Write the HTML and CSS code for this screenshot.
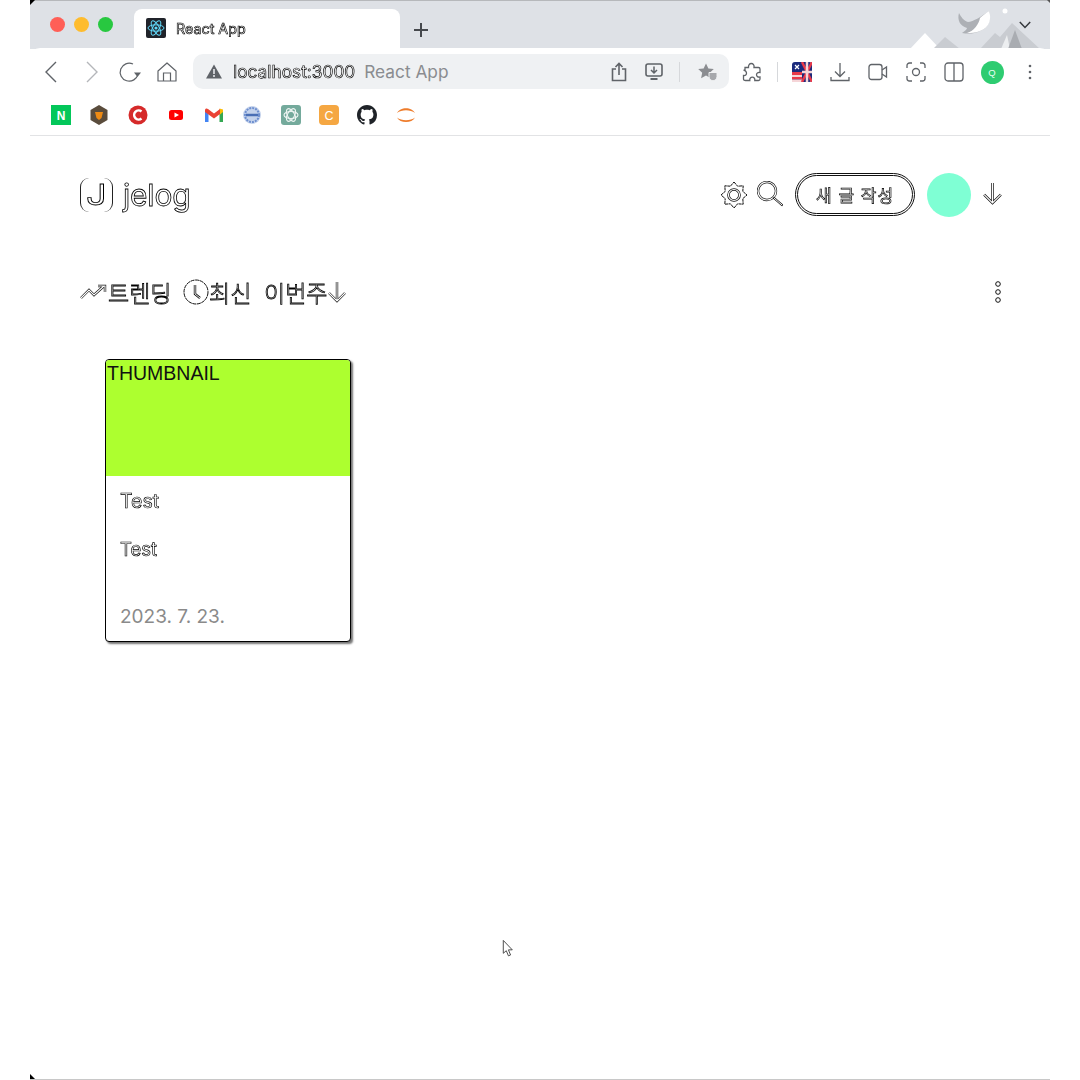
FILE: index.html
```html
<!DOCTYPE html>
<html lang="ko">
<head>
<meta charset="utf-8">
<title>React App</title>
<link rel="stylesheet" href="styles.css">
</head>
<body>
<div class="window">
  <div class="corner corner-top"></div>
  <div class="corner corner-right"></div>
  <div class="tabstrip">
    <div class="lights"><span class="light red"></span><span class="light yellow"></span><span class="light green"></span></div>
    <div class="tab">
      <svg class="favicon" viewBox="0 0 20 20"><rect width="20" height="20" rx="2" fill="#20232a"/><g fill="none" stroke="#61dafb" stroke-width="1"><ellipse cx="10" cy="10" rx="8" ry="3.2"/><ellipse cx="10" cy="10" rx="8" ry="3.2" transform="rotate(60 10 10)"/><ellipse cx="10" cy="10" rx="8" ry="3.2" transform="rotate(120 10 10)"/></g><circle cx="10" cy="10" r="1.6" fill="#61dafb"/></svg>
      <span class="tab-title outline-thin">React App</span>
    </div>
    <svg class="newtab" viewBox="0 0 14 14"><path d="M7 0v14M0 7h14" stroke="#45484d" stroke-width="2"/></svg>
    <svg class="theme" viewBox="0 0 160 49">
      <path d="M20 49 35 33 50 49Z" fill="#fff"/>
      <path d="M43 49 55 37 70 49Z" fill="#c9ccd1"/>
      <path d="M90 49 105 33 110 37 122 23 150 49Z" fill="#c9ccd1"/>
      <path d="M111 49 117 35 120 49Z" fill="#eceef0"/>
      <path d="M118 49 125 30 132 49Z" fill="#a9acb1"/>
      <path d="M69 13C71 17 74 21 78 22 83 22 92 16 99 11 101 19 99 28 90 31 84 34 78 34 72 33 75 31 77 29 77 28 70 26 67 20 69 13Z" fill="#adb0b5"/>
      <path d="M99 11C102 19 99 28 90 31 85 33 81 33 77 33 84 31 89 24 90 18 93 15 96 13 99 11Z" fill="#fff"/>
      <circle cx="115" cy="11" r="2.5" fill="#fff"/>
    </svg>
    <svg class="chevron" viewBox="0 0 12 8"><path d="M.8 1 6 6.4 11.2 1" fill="none" stroke="#35383c" stroke-width="1.5"/></svg>
  </div>

  <div class="toolbar">
    <button class="tb back"><svg viewBox="0 0 24 24" class="ic"><path d="M16 3 6 13l10 10" transform="translate(0 -1)" fill="none" stroke="#5f6368" stroke-width="1.4"/></svg></button>
    <button class="tb forward"><svg viewBox="0 0 24 24" class="ic"><path d="m8 3 10 10L8 23" transform="translate(-1 -1)" fill="none" stroke="#b4b6ba" stroke-width="1.4"/></svg></button>
    <button class="tb reload"><svg viewBox="0 0 24 24" class="ic"><path d="M21 14a9 9 0 1 1-5-10" fill="none" stroke="#5f6368" stroke-width="1.2"/><path d="M17 12.500h7l-3.500 4.500z" fill="#5f6368"/></svg></button>
    <button class="tb home"><svg viewBox="0 0 24 24" class="ic"><path d="M3 11 12 3l9 8v10H3z" fill="none" stroke="#5f6368" stroke-width="1.2" stroke-linejoin="round"/><path d="M8.500 21v-8h7v8" fill="none" stroke="#5f6368" stroke-width="1.2"/></svg></button>
    <div class="omnibox">
      <svg class="warn" viewBox="0 0 16 15"><path d="M8 .5 16 14.500H0Z" fill="#5f6368"/><path d="M8 5v5M8 11v2" stroke="#eff1f3" stroke-width="1.500"/></svg>
      <span class="url outline-thin">localhost:3000</span>
      <span class="page-name">React App</span>
      <span class="omni-spacer"></span>
      <svg class="omni-ic share" viewBox="0 0 16 20"><path d="M5 7H1.500v11.500h13V7H11M8 13V1.500M4.500 5 8 1.500 11.500 5" fill="none" stroke="#5f6368" stroke-width="1.600"/></svg>
      <svg class="omni-ic install" viewBox="0 0 18 18"><rect x="1" y="1" width="16" height="12" rx="2" fill="none" stroke="#5f6368" stroke-width="1.600"/><path d="M9 3.500v6M6 7l3 3 3-3" fill="none" stroke="#5f6368" stroke-width="1.500"/><path d="M5.500 15h7v2h-7z" fill="#5f6368"/></svg>
      <span class="sep omni-sep"></span>
      <svg class="omni-ic star" viewBox="0 0 20 18"><path d="m8 .5 2.400 5 5.400.6-4 3.700 1.100 5.400L8 12.500 3.100 15.200l1.100-5.400-4-3.700 5.400-.6z" fill="#8b8d91"/><path d="M11 9.500h8v4c0 2.500-2 4-4 4.300-2-.3-4-1.800-4-4.300z" fill="#a6a8ac" stroke="#eff1f3"/></svg>
    </div>
    <button class="tb ext"><svg viewBox="0 0 20 20" class="ic"><path d="M3 8V5.500h3.500C6.300 3 7.500 1.500 9.300 1.500S12.500 3 12 5.500h4.500c1 0 1.500.5 1.500 1.500v3.500c-2.300-.4-3.500.8-3.500 2.300s1.300 2.600 3.500 2.200v2c0 1-.5 1.500-1.500 1.500h-3.700c.3-2.300-1-3.300-2.500-3.300s-2.800 1-2.500 3.300H3.500c-1 0-2-.5-2-1.500v-3.500c2 .3 3-1 3-2.200S3.500 8 1.500 8.300" fill="none" stroke="#5f6368" stroke-width="1.300"/></svg></button>
    <span class="sep tool-sep"></span>
    <button class="tb flag"><svg viewBox="0 0 20 20" class="ic"><rect width="20" height="20" rx="3" fill="#1b2a7c"/><path d="M0 10h10v3H0zM0 15h10v2.500H0z" fill="#e8394a"/><path d="M0 13h10v2H0zM0 17.500h10V20H0z" fill="#f5d5d8"/><path d="M10 0l10 20M20 0 10 20" stroke="#e8394a" stroke-width="2.500"/><path d="M15 0v20M10 10h10" stroke="#f5d5d8" stroke-width="2.500"/><path d="M3 3l4 4M7 3 3 7" stroke="#fff" stroke-width="1.200"/></svg></button>
    <button class="tb"><svg viewBox="0 0 20 20" class="ic"><path d="M10 1v13M5 9.500l5 5 5-5M1 15v3.500h18V15" fill="none" stroke="#5f6368" stroke-width="1.300"/></svg></button>
    <button class="tb"><svg viewBox="0 0 20 20" class="ic"><rect x="1" y="2.500" width="13" height="15" rx="2.500" fill="none" stroke="#5f6368" stroke-width="1.300"/><path d="M14 8l4.500-3v10L14 12" fill="none" stroke="#5f6368" stroke-width="1.300"/></svg></button>
    <button class="tb"><svg viewBox="0 0 20 20" class="ic"><path d="M1 6V3.500A2.500 2.500 0 0 1 3.500 1H6M14 1h2.500A2.500 2.500 0 0 1 19 3.500V6M19 14v2.500a2.500 2.500 0 0 1-2.500 2.500H14M6 19H3.500A2.500 2.500 0 0 1 1 16.500V14" fill="none" stroke="#5f6368" stroke-width="1.300"/><circle cx="10" cy="10" r="3.500" fill="none" stroke="#5f6368" stroke-width="1.300"/></svg></button>
    <button class="tb"><svg viewBox="0 0 20 20" class="ic"><rect x="1" y="1" width="18" height="18" rx="3" fill="none" stroke="#5f6368" stroke-width="1.300"/><path d="M10 1v18" stroke="#5f6368" stroke-width="1.300"/></svg></button>
    <button class="tb"><span class="profile">Q</span></button>
    <button class="tb"><svg viewBox="0 0 4 16" class="dots"><circle cx="2" cy="2" r="1.300" fill="#5f6368"/><circle cx="2" cy="8" r="1.300" fill="#5f6368"/><circle cx="2" cy="14" r="1.300" fill="#5f6368"/></svg></button>
  </div>

  <div class="bookmarks">
    <svg class="bm" viewBox="0 0 20 20"><rect width="20" height="20" fill="#03c75a"/><text x="10" y="15" text-anchor="middle" class="bm-text">N</text></svg>
    <svg class="bm" viewBox="0 0 20 20"><path d="M10 0 18.500 5v10L10 20l-8.500-5V5z" fill="#5a4c3c"/><path d="M6 7h8l-1.500 6L10 15l-2.500-2z" fill="#ee8a13"/></svg>
    <svg class="bm" viewBox="0 0 20 20"><circle cx="10" cy="10" r="9.500" fill="#d62a2a"/><path d="M13.500 6.500a4.500 4.500 0 1 0 0 7" fill="none" stroke="#fff" stroke-width="2.500"/></svg>
    <svg class="bm" viewBox="0 0 20 20"><rect x="3" y="5" width="14" height="10" rx="2.500" fill="#f00"/><path d="m8.500 7.500 4.500 2.500-4.500 2.500z" fill="#fff"/></svg>
    <svg class="bm" viewBox="0 0 20 20"><path d="M1 5v12h3.500V9z" fill="#4285f4"/><path d="M19 5v12h-3.500V9z" fill="#34a853"/><path d="M15.500 3.500 19 4.500V7l-3.500 3z" fill="#fbbc04"/><path d="M1 7V5c0-1.500 1.800-2 3-1l6 4.500L16 4v5l-6 4.500z" fill="#ea4335"/></svg>
    <svg class="bm" viewBox="0 0 20 20"><circle cx="10" cy="10" r="9" fill="#c5d3ec"/><circle cx="10" cy="10" r="7" fill="none" stroke="#6e8fcf" stroke-width="2" stroke-dasharray="2 1"/><path d="M4 10h12" stroke="#4a6fb5" stroke-width="2.500"/></svg>
    <svg class="bm" viewBox="0 0 20 20"><rect width="20" height="20" rx="3" fill="#74aa9c"/><g fill="none" stroke="#eef5f3" stroke-width="1.100"><ellipse cx="10" cy="10" rx="7" ry="3.500"/><ellipse cx="10" cy="10" rx="7" ry="3.500" transform="rotate(60 10 10)"/><ellipse cx="10" cy="10" rx="7" ry="3.500" transform="rotate(120 10 10)"/></g></svg>
    <svg class="bm" viewBox="0 0 20 20"><rect width="20" height="20" rx="4" fill="#f5a742"/><text x="10" y="14.500" text-anchor="middle" class="bm-text light-text">C</text></svg>
    <svg class="bm" viewBox="0 0 16 16"><path fill="#1f2328" d="M8 0C3.580 0 0 3.580 0 8c0 3.540 2.290 6.530 5.470 7.590.4.070.55-.17.55-.38 0-.19-.01-.82-.01-1.490-2.010.37-2.530-.49-2.690-.94-.09-.23-.48-.94-.82-1.130-.28-.15-.68-.52-.01-.53.630-.01 1.080.58 1.230.82.720 1.210 1.870.87 2.330.66.070-.52.280-.87.510-1.070-1.780-.2-3.640-.89-3.640-3.950 0-.87.310-1.590.82-2.150-.08-.2-.36-1.020.08-2.120 0 0 .67-.21 2.200.82.640-.18 1.320-.27 2-.27s1.360.09 2 .27c1.530-1.040 2.200-.82 2.200-.82.440 1.100.16 1.920.08 2.120.51.560.82 1.270.82 2.150 0 3.070-1.870 3.750-3.650 3.950.29.250.54.730.54 1.480 0 1.070-.01 1.930-.01 2.200 0 .21.150.46.550.38A8.010 8.010 0 0 0 16 8c0-4.420-3.580-8-8-8z"/></svg>
    <svg class="bm" viewBox="0 0 20 20"><path d="M1 8C4 1.500 16 1.500 19 8 14.500 4.300 5.500 4.300 1 8ZM1 12.500C4 18.500 16 18.500 19 12.500 14.500 16 5.500 16 1 12.500Z" fill="#ee7c2b"/></svg>
  </div>

  <main class="page">
    <header class="site-header">
      <a class="logo">
        <span class="logo-mark"><span class="logo-j outline">J</span></span>
        <span class="logo-text outline">jelog</span>
      </a>
      <div class="header-actions">
        <svg class="head-ic gear" viewBox="0 0 28 28"><g fill="none"><path d="M14 1 17.600 5.200 23.200 4.800 22.800 10.400 27 14 22.800 17.600 23.200 23.200 17.600 22.800 14 27 10.400 22.800 4.800 23.200 5.200 17.600 1 14 5.200 10.400 4.800 4.800 10.400 5.200Z" stroke="#111" stroke-width="1" stroke-dasharray="3 .5"/><circle cx="14" cy="14" r="5.500" stroke="#111" stroke-width="2.600"/><circle cx="14" cy="14" r="5.500" stroke="#fff" stroke-width="1.200"/></g></svg>
        <svg class="head-ic search" viewBox="0 0 26 26"><g fill="none" stroke-linecap="round"><circle cx="10" cy="10" r="9" stroke="#111" stroke-width="2.400"/><circle cx="10" cy="10" r="9" stroke="#fff" stroke-width="1.200"/><path d="M17 17l8 7" stroke="#111" stroke-width="2.200"/><path d="M17 17l8 7" stroke="#fff" stroke-width="1"/></g></svg>
        <button class="write-btn"><span class="outline-btn">새 글 작성</span></button>
        <span class="avatar"></span>
        <svg class="head-ic arrow" viewBox="0 0 20 22"><g fill="none"><path d="M10 1v19M2 12l8 8 8-8" stroke="#111" stroke-width="2.400"/><path d="M10 1v19M2 12l8 8 8-8" stroke="#fff" stroke-width="1.100"/></g></svg>
      </div>
    </header>

    <nav class="filter-row">
      <div class="filters">
        <span class="filter trending">
          <svg class="f-ic trend" viewBox="0 0 28 16"><g fill="none"><path d="M1 14l8-8 5 5 10-9M18 2h7v6" stroke="#111" stroke-width="2.400"/><path d="M1 14l8-8 5 5 10-9M18 2h7v6" stroke="#fff" stroke-width="1.100"/></g></svg>
          <span class="outline">트렌딩</span>
        </span>
        <span class="filter latest">
          <svg class="f-ic clock" viewBox="0 0 26 26"><g fill="none"><circle cx="13" cy="13" r="12" stroke="#111" stroke-width="1" stroke-dasharray="4 .6"/><path d="M12 6v9l5 4" stroke="#111" stroke-width="2.400"/><path d="M12 6v9l5 4" stroke="#fff" stroke-width=".9"/></g></svg>
          <span class="outline">최신</span>
        </span>
        <span class="filter week">
          <span class="outline">이번주</span>
          <svg class="f-ic down" viewBox="0 0 20 22"><g fill="none"><path d="M10 1v19M2 12l8 8 8-8" stroke="#111" stroke-width="2.400"/><path d="M10 1v19M2 12l8 8 8-8" stroke="#fff" stroke-width="1.100"/></g></svg>
        </span>
      </div>
      <svg class="kebab" viewBox="0 0 6 22"><g fill="#fff" stroke="#111" stroke-width="1"><circle cx="3" cy="3" r="2.300"/><circle cx="3" cy="11" r="2.300"/><circle cx="3" cy="19" r="2.300"/></g></svg>
    </nav>

    <article class="card">
      <div class="thumb">THUMBNAIL</div>
      <div class="card-body">
        <h2 class="card-title outline-thin">Test</h2>
        <p class="card-desc outline-thin">Test</p>
        <p class="card-date">2023. 7. 23.</p>
      </div>
    </article>
  </main>
  <svg class="cursor" viewBox="0 0 14 22"><path d="M1.500 1v15l3.500-3 2.500 6 2.500-1-2.500-6h4.500z" fill="#fff" stroke="#333" stroke-width="1"/></svg>
  <div class="corner corner-bottom"></div>
</div>
</body>
</html>
```
FILE: styles.css
```css
* { box-sizing: border-box; }
html, body { margin: 0; padding: 0; background: #fff; }
body { height: 1080px; overflow: hidden; font-family: Inter, "Noto Sans CJK KR", sans-serif; }

.window {
  position: relative;
  margin: 0 30px;
  height: 1080px;
  background: #fff;
  border-bottom: 1px solid #c8c8c8;
  display: flex;
  flex-direction: column;
  overflow: hidden;
}
.corner { position: absolute; width: 5px; height: 5px; background: #000; z-index: 3; }
.corner-top { left: 0; top: 0; clip-path: polygon(0 0, 100% 0, 0 100%); }
.corner-right { right: 0; top: 0; width: 3px; height: 3px; background: #555; clip-path: polygon(0 0, 100% 0, 100% 100%); }
.corner-bottom { left: 0; bottom: 0; clip-path: polygon(0 0, 100% 100%, 0 100%); }

.outline, .outline-thin, .outline-btn {
  display: inline-block;
  color: #fff;
  will-change: transform;
}
.outline { -webkit-text-stroke: .8px #000; }
.outline-thin { -webkit-text-stroke: .65px #000; }
.outline-btn { -webkit-text-stroke: .7px #000; }

.tabstrip {
  position: relative;
  flex: none;
  height: 49px;
  background: #dee1e6;
  border-top: 1px solid #b6b8bb;
  display: flex;
  align-items: flex-end;
}
.lights { display: flex; gap: 9px; align-self: flex-start; margin: 16px 0 0 20px; width: 84px; }
.light { width: 15px; height: 15px; border-radius: 50%; }
.red { background: #ff5f57; }
.yellow { background: #febc2e; }
.green { background: #28c840; }
.tab {
  width: 266px;
  height: 40px;
  background: #fff;
  border-radius: 8px 8px 0 0;
  display: flex;
  align-items: center;
  padding: 0 12px 2px;
  gap: 10px;
}
.favicon { width: 20px; height: 20px; }
.tab-title { font-size: 14.300px; }
.newtab { width: 14px; height: 14px; margin: 0 0 12px 14px; }
.theme { position: absolute; left: 860px; top: -1px; width: 160px; height: 49px; }
.chevron { position: absolute; right: 19px; top: 20px; width: 12px; height: 8px; }

.toolbar {
  flex: none;
  height: 48px;
  margin-top: -1px;
  background: #fff;
  border-radius: 10px 10px 0 0;
  display: flex;
  align-items: center;
  position: relative;
  padding: 0 1px 0 3px;
  z-index: 1;
}
.tb {
  flex: none;
  width: 38px;
  height: 38px;
  padding: 0;
  background: none;
  border: 0;
  display: flex;
  align-items: center;
  justify-content: center;
}
.ic { width: 20px; height: 20px; }
.back { margin-right: 2px; }
.back .ic, .forward .ic { width: 24px; height: 24px; }
.reload { width: 36px; }
.reload .ic { width: 24px; height: 24px; }
.home .ic { width: 24px; height: 24px; }
.home { margin-left: 1px; margin-right: -1px; }
.omnibox {
  flex: none;
  width: 536px;
  height: 35px;
  margin: -1px 4px 0 8px;
  background: #eff1f3;
  border-radius: 10px;
  display: flex;
  align-items: center;
  padding: 0 11px 0 13px;
}
.warn { width: 16px; height: 15px; margin-right: 11px; flex: none; }
.url { font-size: 17.300px; }
.page-name { font-size: 17.300px; color: #8a8c90; margin-left: 9px; }
.omni-spacer { flex: 1; }
.omni-ic { flex: none; }
.share { width: 16px; height: 20px; margin-right: 18px; }
.install { width: 18px; height: 18px; margin-right: 16px; }
.sep { flex: none; width: 1px; height: 20px; background: #d6d8db; }
.omni-sep { margin-right: 18px; }
.star { width: 20px; height: 18px; margin-right: 0; }
.tool-sep { margin: 0 5px 0 6px; }
.flag { width: 38px; }
.profile {
  width: 23px;
  height: 23px;
  border-radius: 50%;
  background: #2ecc71;
  color: #e8fff2;
  font-size: 9.500px;
  display: flex;
  align-items: center;
  justify-content: center;
}
.dots { width: 4px; height: 16px; }

.bookmarks {
  flex: none;
  height: 40px;
  border-bottom: 1px solid #e2e3e5;
  display: flex;
  align-items: center;
  gap: 18.300px;
  padding: 0 0 2px 21px;
}
.bm { width: 20px; height: 20px; flex: none; }
.bm-text { font: 700 12px "Liberation Sans", sans-serif; fill: #fff; }
.light-text { font-weight: 400; font-size: 12.500px; }

.page { flex: 1; padding: 37px 48px 0; }
.site-header { display: flex; align-items: center; justify-content: space-between; height: 43px; }
.logo { display: flex; align-items: center; gap: 10px; margin-left: 2px; }
.logo-mark {
  width: 33px;
  height: 34px;
  border-left: 1px solid #222;
  border-right: 1px solid #222;
  border-radius: 9px;
  display: flex;
  align-items: center;
  justify-content: center;
}
.logo-j { font-size: 29px; transform: scaleX(1.25); }
.logo-text { font-size: 30px; line-height: 36px; letter-spacing: -.2px; }
.header-actions { display: flex; align-items: center; }
.head-ic { flex: none; }
.gear { width: 28px; height: 28px; margin-right: 9px; }
.search { width: 26px; height: 26px; margin-right: 12px; margin-top: -2px; }
.write-btn {
  width: 120px;
  height: 43px;
  background: #fff;
  border: 3px double #111;
  border-radius: 22px;
  font-size: 17px;
  font-family: inherit;
  letter-spacing: 1px;
  padding: 0;
  margin-right: 12px;
}
.avatar { width: 44px; height: 44px; border-radius: 50%; background: #7fffd4; margin-right: 11px; }
.arrow { width: 21px; height: 23px; margin-right: -1px; margin-top: -2px; }

.filter-row {
  display: flex;
  align-items: center;
  justify-content: space-between;
  height: 40px;
  margin-top: 56px;
  font-size: 23px;
  font-weight: 300;
}
.filters { display: flex; align-items: center; margin-left: 2px; }
.filter { display: flex; align-items: center; white-space: nowrap; }
.trend { width: 28px; height: 16px; }
.trending { margin-right: 12px; }
.clock { width: 26px; height: 26px; }
.latest { margin-right: 12px; }
.down { width: 20px; height: 22px; }
.kebab { width: 6px; height: 22px; margin-right: 1px; }

.card {
  width: 246px;
  height: 283px;
  margin: 47px 0 0 27px;
  background: #fff;
  border: 1px solid #000;
  border-radius: 4px;
  box-shadow: 2px 2px 2px #777;
  display: flex;
  flex-direction: column;
  overflow: hidden;
}
.thumb {
  flex: none;
  height: 116px;
  padding-left: 1px;
  background: #adff2f;
  color: #111;
  font-family: "Liberation Sans", sans-serif;
  font-size: 19.500px;
  line-height: 26px;
}
.card-body { flex: 1; padding: 13px 14px 0; display: flex; flex-direction: column; }
.card-title { margin: 0; font-size: 19.500px; font-weight: 400; line-height: 24px; }
.card-desc { margin: 24px 0 0; font-size: 18.500px; line-height: 24px; }
.card-date { margin: 44px 0 0; font-size: 19px; line-height: 24px; color: #8a8a8a; }

.cursor { position: absolute; left: 472px; top: 939px; width: 12px; height: 20px; }
```
